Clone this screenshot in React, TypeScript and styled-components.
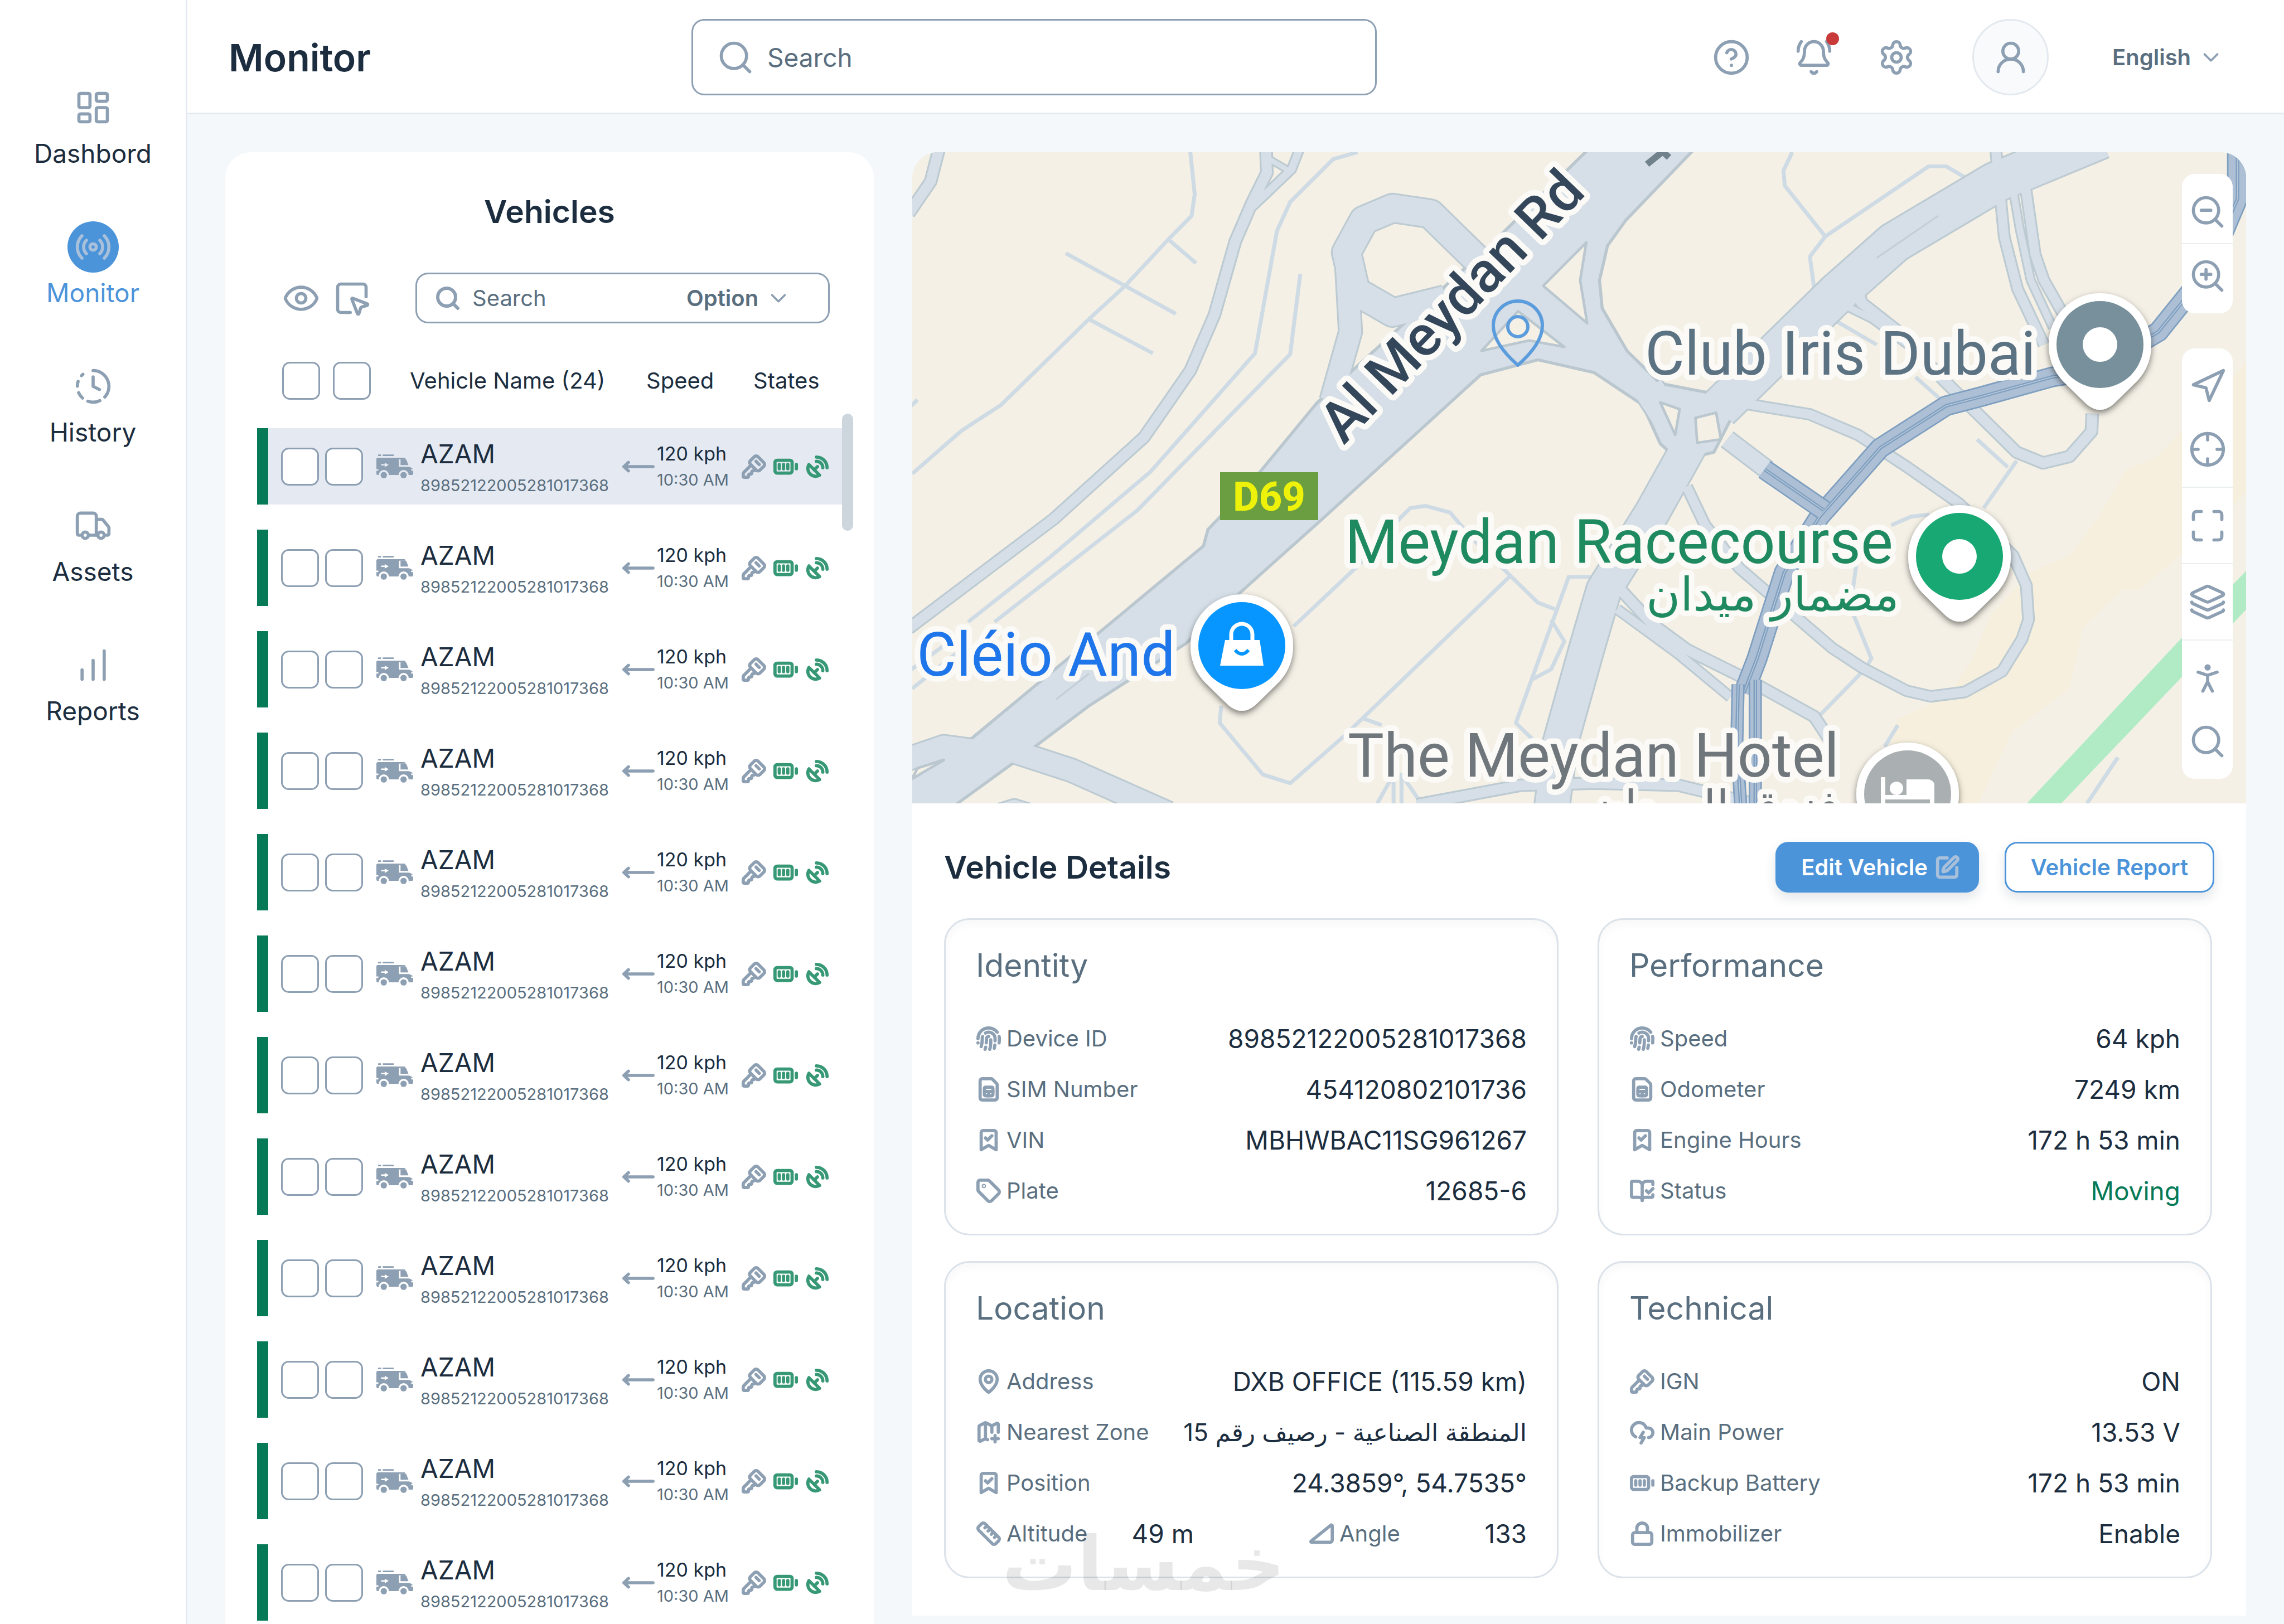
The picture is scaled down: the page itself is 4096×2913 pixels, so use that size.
import React from "react";
import styled, { createGlobalStyle, css } from "styled-components";
import {
  LayoutDashboard, Radio, ClockFading, Truck, ChartNoAxesColumnIncreasing, Search, CircleHelp, BellRing,
  Settings, UserRound, ChevronDown, Eye, SquareMousePointer, KeySquare, BatteryFull, SatelliteDish,
  ZoomOut, ZoomIn, Navigation, Crosshair, Maximize, Layers, PersonStanding, SquarePen, Fingerprint,
  CardSim, BookmarkCheck, Tag, BookOpenCheck, MapPin, MapPlus, Ruler, TriangleRight, CloudLightning, Lock,
} from "lucide-react";

const c = {
  ink: "#1b2d3e",
  slate: "#596e7e",
  icon: "#8d9fb2",
  blue: "#4c94da",
  onBlue: "#a9c0db",
  line: "#e5eaf2",
  page: "#f4f8fb",
  card: "#dbe2e9",
  green: "#067a57",
  greenIcon: "#379876",
  thumb: "#cdd5dd",
};

const GlobalStyle = createGlobalStyle`
  *, *::before, *::after { box-sizing: border-box; }
  body {
    margin: 0;
    background: ${c.page};
    color: ${c.ink};
    font-family: Inter, "DejaVu Sans", sans-serif;
    font-optical-sizing: none;
    font-size: 46px;
    line-height: 68px;
  }
  h1, h2, h3, dl, dd, ul, table { margin: 0; padding: 0; }
  button, input, select { font: inherit; color: inherit; }
  svg { display: block; flex: none; }
`;

/* ---------- shell ---------- */

const Shell = styled.div`
  display: grid;
  grid-template-columns: 336px minmax(0, 1fr);
  min-height: 100vh;
`;

const Sidebar = styled.nav`
  background: #fff;
  border-right: 3px solid ${c.line};
  padding-top: 147px;
`;

const NavList = styled.ul`
  list-style: none;
  display: flex;
  flex-direction: column;
  gap: 88px;
`;

const NavLink = styled.a<{ $active?: boolean }>`
  display: flex;
  flex-direction: column;
  align-items: center;
  gap: 2px;
  text-decoration: none;
  color: ${(p) => (p.$active ? c.blue : c.ink)};
`;

const NavIcon = styled.span<{ $active?: boolean }>`
  width: 92px;
  height: 92px;
  border-radius: 50%;
  display: grid;
  place-items: center;
  color: ${(p) => (p.$active ? c.onBlue : c.icon)};
  background: ${(p) => (p.$active ? c.blue : "transparent")};
`;

const Body = styled.div`
  display: flex;
  flex-direction: column;
  min-width: 0;
`;

const TopBar = styled.header`
  display: grid;
  grid-template-columns: 830px minmax(0, 1229px) minmax(0, 1fr);
  align-items: center;
  height: 205px;
  padding: 3px 108px 0 74px;
  background: #fff;
  border-bottom: 3px solid ${c.line};
`;

const PageTitle = styled.h1`
  font-size: 68px;
  line-height: 80px;
  font-weight: 600;
`;

const SearchBox = styled.label<{ $compact?: boolean }>`
  display: flex;
  align-items: center;
  min-width: 0;
  background: #fff;
  border: 3px solid ${c.icon};
  border-radius: 23px;
  color: ${c.icon};
  ${(p) =>
    p.$compact
      ? css`
          flex: 1;
          height: 91px;
          gap: 20px;
          padding: 0 66px 0 31px;
          font-size: 40px;
        `
      : css`
          height: 137px;
          gap: 23px;
          padding: 0 42px;
        `}
`;

const SearchInput = styled.input`
  flex: 1;
  min-width: 0;
  padding: 0;
  border: 0;
  outline: 0;
  background: none;
  color: ${c.slate};
  &::placeholder { color: ${c.slate}; opacity: 1; }
`;

const Actions = styled.div`
  display: flex;
  align-items: center;
  justify-content: flex-end;
  gap: 80px;
`;

const IconButton = styled.button`
  position: relative;
  display: grid;
  place-items: center;
  padding: 0;
  border: 0;
  background: none;
  color: ${c.icon};
  cursor: pointer;
`;

const Dot = styled.span`
  position: absolute;
  top: -11px;
  right: -11px;
  width: 23px;
  height: 23px;
  border-radius: 50%;
  background: #c93a3a;
`;

const Avatar = styled(IconButton)`
  width: 137px;
  height: 137px;
  margin: 0 34px 0 22px;
  border-radius: 50%;
  border: 3px solid #e3e9ee;
  background: #f8fafb;
`;

const Picker = styled.span`
  position: relative;
  display: flex;
  flex: none;
  align-items: center;
  color: ${c.icon};
  svg { position: absolute; right: 0; pointer-events: none; }
`;

const PickerSelect = styled.select`
  appearance: none;
  border: 0;
  outline: 0;
  background: none;
  padding: 0 58px 0 0;
  font-size: 40px;
  font-weight: 600;
  color: ${c.slate};
`;

const Main = styled.main`
  flex: 1;
  display: grid;
  grid-template-columns: minmax(0, 1163fr) minmax(0, 2392fr);
  gap: 69px;
  padding: 68px 68px 0;
`;

/* ---------- vehicles ---------- */

const VehiclesPanel = styled.section`
  background: #fff;
  border-radius: 46px 46px 0 0;
  padding: 67px 57px 0;
`;

const PanelTitle = styled.h2`
  font-size: 57px;
  line-height: 80px;
  font-weight: 600;
`;

const VehiclesTitle = styled(PanelTitle)`
  text-align: center;
`;

const Toolbar = styled.div`
  display: flex;
  align-items: center;
  gap: 23px;
  margin: 69px 22px 69px 45px;
  ${IconButton} + ${SearchBox} { margin-left: 57px; }
`;

const ListArea = styled.div`
  position: relative;
  margin-right: -20px;
  padding-right: 20px;
`;

const VehicleTable = styled.table`
  display: block;
  text-align: left;
`;

const TableHead = styled.thead`
  display: block;
  margin-bottom: 51px;
`;

const HeadRow = styled.tr`
  display: grid;
  grid-template-columns: 229px minmax(0, 1fr) 192px 159px;
  align-items: center;
  padding-left: 45px;
  font-size: 40px;
`;

const HeadCell = styled.th`
  padding: 0;
  font-weight: 400;
  white-space: nowrap;
`;

const TableBody = styled.tbody`
  display: flex;
  flex-direction: column;
  gap: 45px;
`;

const VehicleRow = styled.tr<{ $selected?: boolean }>`
  display: grid;
  grid-template-columns: 171px minmax(0, 1fr) 217px 181px;
  align-items: center;
  height: 137px;
  padding-left: 23px;
  border-left: 20px solid ${c.green};
  background: ${(p) => (p.$selected ? c.line : "#fff")};
`;

const Cell = styled.td`
  padding: 0;
  white-space: nowrap;
`;

const Checks = styled.div<{ $wide?: boolean }>`
  display: flex;
  gap: ${(p) => (p.$wide ? 23 : 11)}px;
`;

const Check = styled.input`
  appearance: none;
  width: 68px;
  height: 68px;
  margin: 0;
  border: 3px solid ${c.icon};
  border-radius: 14px;
  background: #fff;
`;

const CellLine = styled.div<{ $gap: number }>`
  display: flex;
  align-items: center;
  gap: ${(p) => p.$gap}px;
  color: ${c.icon};
`;

const Stack = styled.div`
  display: flex;
  flex-direction: column;
`;

const Name = styled.span`
  color: ${c.ink};
`;

const Speed = styled.span`
  font-size: 34px;
  line-height: 48px;
  color: ${c.ink};
`;

const Small = styled.span`
  font-size: 29px;
  line-height: 46px;
  color: ${c.slate};
`;

const OkState = styled.span`
  color: ${c.greenIcon};
`;

const ScrollThumb = styled.div`
  position: absolute;
  right: 0;
  top: 93px;
  width: 20px;
  height: 210px;
  border-radius: 10px;
  background: ${c.thumb};
`;

/* ---------- map ---------- */

const RightColumn = styled.div`
  min-width: 0;
`;

const MapFrame = styled.section`
  position: relative;
  aspect-ratio: 2392 / 1168;
  border-radius: 46px 46px 0 0;
  overflow: hidden;
`;

const MapCanvas = styled.svg`
  width: 100%;
  height: 100%;
`;

const MapTools = styled.div`
  position: absolute;
  top: 39px;
  right: 24px;
  display: flex;
  flex-direction: column;
  gap: 63px;
`;

const ToolGroup = styled.div`
  width: 91px;
  border-radius: 23px;
  background: #fff;
`;

const ToolSection = styled.div<{ $pad: string }>`
  padding: ${(p) => p.$pad};
  & + & { border-top: 2px solid #eceff2; }
`;

const Tool = styled(IconButton)`
  width: 100%;
  height: 113px;
`;

/* ---------- details ---------- */

const Details = styled.section`
  position: relative;
  background: #fff;
  margin-bottom: 15px;
  padding: 69px 57px 67px;
`;

const DetailsHead = styled.div`
  display: flex;
  align-items: center;
  justify-content: space-between;
  margin-bottom: 46px;
`;

const Buttons = styled.div`
  display: flex;
  gap: 46px;
`;

const Button = styled.button<{ $primary?: boolean }>`
  display: flex;
  align-items: center;
  justify-content: center;
  gap: 12px;
  height: 91px;
  padding: 0 ${(p) => (p.$primary ? "31px 0 43px" : "44px")};
  border: 3px solid ${c.blue};
  border-radius: 23px;
  background: ${(p) => (p.$primary ? c.blue : "#fff")};
  color: ${(p) => (p.$primary ? "#fff" : c.blue)};
  font-size: 40px;
  font-weight: 600;
  white-space: nowrap;
  box-shadow: 0 10px 20px rgba(40, 55, 75, 0.13);
  svg { color: ${c.onBlue}; }
`;

const CardGrid = styled.div`
  display: grid;
  grid-template-columns: repeat(2, minmax(0, 1fr));
  gap: 46px 70px;
  padding-right: 4px;
`;

const Card = styled.article`
  border: 3px solid ${c.card};
  border-radius: 46px;
  padding: 42px 54px 43px;
  box-shadow: inset 0 8px 14px rgba(60, 70, 60, 0.04);
`;

const CardTitle = styled.h3`
  font-size: 57px;
  line-height: 80px;
  font-weight: 400;
  color: ${c.slate};
  margin-bottom: 57px;
`;

const Fields = styled.dl`
  display: flex;
  flex-direction: column;
  gap: 23px;
`;

const Field = styled.div`
  display: flex;
  align-items: center;
  justify-content: space-between;
`;

const HalfField = styled(Field)`
  width: 391px;
`;

const Term = styled.dt`
  display: flex;
  align-items: center;
  gap: 9px;
  font-size: 40px;
  color: ${c.slate};
  svg { color: ${c.icon}; }
`;

const Value = styled.dd<{ $good?: boolean; $arabic?: boolean }>`
  white-space: nowrap;
  color: ${(p) => (p.$good ? c.green : c.ink)};
  ${(p) => p.$arabic && css`font-size: 44px;`}
`;

const Watermark = styled.div`
  position: absolute;
  left: 161px;
  bottom: 25px;
  font-family: "DejaVu Sans", sans-serif;
  font-weight: 700;
  font-size: 134px;
  line-height: 134px;
  color: rgba(0, 0, 0, 0.09);
  pointer-events: none;
`;

/* ---------- drawings ---------- */

const Van = () => (
  <svg width="66" height="43" viewBox="0 0 93 60" fill="currentColor" aria-hidden="true">
    <rect x="4" width="8" height="4" rx="1" />
    <rect x="16" width="28" height="4" rx="1" />
    <path
      fillRule="evenodd"
      d="M0 12Q0 8 4 8H71Q73 8 74 12H57V31H82Q90 33 92 37H88V41H93V48Q93 52 89 52H81.500A12.500 12.500 0 0 0 56 52H31.500A12.500 12.500 0 0 0 6 52H4Q0 52 0 48V41H5V37H0ZM12 24.500V28H21V32L31 26.200L21 20.500V24.500Z"
    />
    <path d="M61 12H73Q75 12 76 14L81 27H61Z" />
    <circle cx="18.700" cy="52" r="8" />
    <circle cx="68.700" cy="52" r="8" />
  </svg>
);

const ArrowLeft = () => (
  <svg width="66" height="66" viewBox="0 0 24 24" fill="none" stroke="currentColor" strokeWidth="2" strokeLinecap="round" strokeLinejoin="round" aria-hidden="true">
    <path d="M2.500 12H21.500M5.500 9.200L2.500 12L5.500 14.800" />
  </svg>
);

const P = (n: number[]) => n.reduce((s, v, i) => s + (i % 2 ? "," : i ? " " : "") + v, "");

type Road = { p: number[]; w: number };

const minor: number[][] = [
  [650, 22, 660, 120, 653, 170, 600, 225, 500, 335, 420, 410, 220, 610, 130, 670, 18, 770],
  [600, 225, 663, 280], [367, 257, 617, 398], [422, 412, 565, 490], [10, 618, 30, 598],
  [1030, 22, 975, 38, 877, 138, 847, 205, 797, 490, 560, 765, 330, 965, 145, 1115],
  [900, 305, 877, 492, 530, 855, 205, 1115], [18, 1270, 140, 1170], [10, 1230, 90, 1170],
  [885, 1125, 1030, 985, 1130, 870, 1150, 850, 1185, 845, 1240, 860, 1290, 920, 1440, 1070, 1478, 1085],
  [1568, 1010, 1510, 1010, 1390, 1350, 1430, 1390], [1470, 1110, 1500, 1160, 1470, 1225, 1425, 1250],
  [1375, 1010, 1000, 1380, 877, 1490, 815, 1470, 717, 1350, 720, 1310], [1045, 1340, 1085, 1355],
  [1075, 1537, 1112, 1470, 1112, 1537], [1130, 1537, 1130, 1470, 1175, 1537],
  [2018, 22, 1998, 65, 2001, 100, 2093, 218, 2058, 265, 2068, 340],
  [2093, 218, 2328, 55, 2368, 55, 2418, 85], [2438, 690, 2508, 755], [2528, 740, 2453, 850],
  [2168, 950, 2150, 1080, 2198, 1200, 2183, 1225, 2073, 1340], [2258, 1355, 2228, 1405],
  [2758, 1430, 2688, 1537], [2243, 890, 2288, 870, 2330, 865], [2298, 545, 2353, 595], [2093, 400, 2210, 470],
];

const cased: Road[] = [
  { p: [80, 10, 60, 90, 10, 165], w: 24 },
  { p: [822, 10, 824, 70, 790, 140, 752, 230, 705, 400, 650, 530, 545, 685, 340, 875, 10, 1130], w: 24 },
  { p: [900, 10, 880, 62, 790, 150], w: 18 }, { p: [824, 35, 876, 66], w: 12 },
  { p: [2480, 10, 2500, 220, 2530, 340, 2590, 470], w: 22 },
  { p: [2515, 80, 2535, 200, 2560, 320, 2610, 430], w: 16 },
  { p: [2545, 80, 2570, 260, 2590, 320, 2640, 410], w: 22 },
  { p: [2168, 340, 2175, 372, 2260, 440, 2360, 550, 2528, 720, 2588, 745, 2648, 730, 2698, 672, 2700, 630], w: 24 },
  { p: [2130, 375, 2200, 410, 2280, 470], w: 16 },
  { p: [1898, 605, 2058, 632, 2168, 680, 2280, 755, 2398, 840, 2520, 960, 2550, 1030, 2555, 1110, 2540, 1155, 2495, 1230, 2410, 1278, 2333, 1288, 2278, 1275, 2178, 1222, 2108, 1175, 1898, 990, 1820, 890, 1778, 800], w: 22 },
  { p: [1628, 1040, 1700, 1120, 1780, 1180, 1918, 1250, 2068, 1335, 2110, 1400], w: 24 },
  { p: [1620, 1085, 1760, 1190, 1878, 1290], w: 20 },
  { p: [1870, 690, 1960, 760], w: 40 },
  { p: [1165, 1540, 1400, 1495, 1568, 1490, 1760, 1495, 1940, 1540], w: 24 },
  { p: [180, 1560, 250, 1538, 320, 1560], w: 20 },
  { p: [200, 1400, 380, 1460, 600, 1560], w: 52 },
  { p: [-10, 1440, 90, 1405, 200, 1420], w: 52 },
  { p: [1320, 290, 1195, 165, 1110, 152, 1045, 180, 1005, 255, 1025, 345, 1110, 395, 1230, 365], w: 64 },
  { p: [1004, 260, 1014, 440, 970, 600], w: 50 },
  { p: [1798, 680, 1700, 860, 1590, 1040, 1550, 1180, 1490, 1400, 1470, 1560], w: 78 },
  { p: [1850, 620, 2120, 350, 2250, 232, 2480, 92, 2720, -10], w: 92 },
  { p: [1690, 570, 1760, 680], w: 70 },
];

const highway = P([
  -20, 1560, 18, 1475, 153, 1386, 680, 938, 690, 900, 718, 870, 805, 770, 938, 605, 1335, 235, 1560, 10,
  1800, 10, 1640, 180, 1598, 240, 1580, 320, 1586, 385, 1643, 485, 1718, 560, 1830, 582, 1880, 640, 1840, 720, 1760, 740,
  1718, 700, 1678, 610, 1568, 535, 1440, 505, 1310, 540, 945, 880, 765, 1045, 640, 1165, 420, 1310, 245, 1445, 90, 1560,
]);

const islands: number[][] = [
  [1452, 333, 1550, 232, 1536, 320, 1552, 420],
  [1395, 392, 1312, 484, 1420, 460, 1500, 475],
  [1718, 604, 1762, 620, 1752, 680],
  [1798, 640, 1845, 628, 1856, 690, 1802, 698],
  [18, 1480, 30, 1455, 90, 1436],
];

const busy: Road[] = [
  { p: [3030, 10, 3030, 130, 2960, 300, 2850, 440, 2700, 530, 2608, 545, 2450, 590, 2368, 612, 2218, 710, 2080, 870, 2000, 1000, 1938, 1200, 1908, 1280], w: 44 },
  { p: [1955, 760, 2090, 855], w: 44 },
  { p: [1895, 1260, 1892, 1400, 1902, 1560], w: 26 },
  { p: [1934, 1250, 1934, 1560], w: 26 },
];

const Pin = ({ x, y, fill, children }: { x: number; y: number; fill: string; children?: React.ReactNode }) => (
  <g transform={`translate(${x} ${y})`}>
    <path
      d="M-92 0A92 92 0 0 1 92 0C92 30 80 52 64 68L24 107Q0 127 -24 107L-64 68C-80 52 -92 30 -92 0Z"
      fill="#fff"
      filter="url(#pinShadow)"
    />
    <circle r="78" fill={fill} />
    {children ?? <circle r="31" fill="#fff" />}
  </g>
);

const Label = styled.text`
  font-family: Roboto, "DejaVu Sans", sans-serif;
  font-size: 109px;
  paint-order: stroke;
  stroke: #fbfaf7;
  stroke-width: 20px;
  stroke-linejoin: round;
`;

const ArabicLabel = styled(Label)`
  font-family: "DejaVu Sans", sans-serif;
  font-size: 83px;
`;

const RoadLabel = styled(Label)`
  font-size: 102px;
  font-weight: 500;
`;

const RouteBadge = styled.text`
  font-family: Roboto, sans-serif;
  font-size: 72px;
  font-weight: 800;
`;

const CityMap = () => (
  <MapCanvas viewBox="0 0 2392 1168" preserveAspectRatio="xMidYMid slice" role="img" aria-label="Map of Al Meydan Rd">
    <defs>
      <filter id="pinShadow" x="-30%" y="-30%" width="160%" height="160%">
        <feDropShadow dx="0" dy="5" stdDeviation="6" floodColor="#000" floodOpacity="0.5" />
      </filter>
    </defs>
    <rect width="2392" height="1168" fill="#f4f0e6" />
    <g transform="translate(-14.300 -17) scale(0.7891 0.771)" fill="none" strokeLinejoin="round">
      <polygon
        fill="#f6efdd"
        points={P([3060, 500, 2848, 730, 2778, 760, 2708, 880, 2648, 960, 2558, 1000, 2468, 1100, 2428, 1200, 2368, 1290, 2258, 1340, 2240, 1380, 2300, 1560, 2430, 1560, 2518, 1370, 2648, 1270, 2678, 1130, 2768, 1040, 2808, 1040, 2968, 900, 3060, 800])}
      />
      <polygon fill="#b0ebc5" points={P([2530, 1560, 2905, 1150, 3060, 985, 3060, 1075, 2608, 1560])} />
      {minor.map((p, i) => (
        <polyline key={i} points={P(p)} stroke="#cfdbe4" strokeWidth="9" />
      ))}
      {cased.map((r, i) => (
        <polyline key={i} points={P(r.p)} stroke="#bccad2" strokeWidth={r.w + 7} />
      ))}
      <polygon points={highway} fill="#d6dfe7" stroke="#bac7cf" strokeWidth="7" />
      {cased.map((r, i) => (
        <polyline key={i} points={P(r.p)} stroke="#d6dfe7" strokeWidth={r.w - 1} />
      ))}
      {islands.map((p, i) => (
        <polygon key={i} points={P(p)} fill="#f4f0e6" stroke="#bac7cf" strokeWidth="6" />
      ))}
      <polyline points={P([345, 1295, 420, 1235])} stroke="#c3ced7" strokeWidth="4" />
      <polyline points={P([2210, 268, 2350, 170])} stroke="#c3ced7" strokeWidth="4" />
      <path d="M1688 50L1722 22M1718 16L1738 34" stroke="#72828d" strokeWidth="15" />
      {busy.map((r, i) => (
        <g key={i}>
          <polyline points={P(r.p)} stroke="#7f9fc0" strokeWidth={r.w + 4} />
          <polyline points={P(r.p)} stroke="#acbfd4" strokeWidth={r.w - 3} />
          <polyline points={P(r.p)} stroke="#7f9fc0" strokeWidth="8" />
          <polyline points={P(r.p)} stroke="#bccbdb" strokeWidth="2" />
        </g>
      ))}
    </g>

    <rect x="552" y="574" width="176" height="86" fill="#6b9d41" />
    <RouteBadge x="640" y="643" textAnchor="middle" fill="#eef20a">D69</RouteBadge>
    <RoadLabel transform="translate(774 526) rotate(-46)" fill="#34475a">Al Meydan Rd</RoadLabel>
    <Label x="1314" y="399" fill="#5b7283">Club Iris Dubai</Label>
    <Label x="776" y="737" fill="#1f8a60">Meydan Racecourse</Label>
    <ArabicLabel x="1543" y="822" textAnchor="middle" fill="#1f8a60">مضمار ميدان</ArabicLabel>
    <Label x="8" y="939" fill="#1f76ea">Cléio And</Label>
    <Label x="781" y="1120" fill="#70777c">The Meydan Hotel</Label>
    <ArabicLabel x="1440" y="1204" textAnchor="middle" fill="#70777c">فندق الميدان</ArabicLabel>

    <g transform="translate(1086 313)" fill="none" stroke="#5b9cdd" strokeWidth="6" strokeLinejoin="round">
      <path d="M0 69C-16 55 -44 28 -44 -2A44 44 0 0 1 44 -2C44 28 16 55 0 69Z" />
      <circle r="18" />
    </g>
    <Pin x={2130} y={345} fill="#78909c" />
    <Pin x={1878} y={725} fill="#18a873" />
    <Pin x={591} y={885} fill="#0795ff">
      <path d="M-30 -10H32L39 36H-39Z" fill="#fff" />
      <path d="M-19 -8V-20A19 19 0 0 1 19 -20V-8" fill="none" stroke="#fff" strokeWidth="7" />
      <path d="M-12 8Q0 22 12 8" fill="none" stroke="#0795ff" strokeWidth="6" />
    </Pin>
    <Pin x={1785} y={1151} fill="#aab0b2">
      <path d="M-44 -30V30M44 22V-16Q44 -20 38 -22H2V6H-44" fill="none" stroke="#fff" strokeWidth="8" />
      <circle cx="-20" cy="-10" r="12" fill="#fff" />
      <path d="M0 -20H36Q46 -18 46 -8V10H0Z" fill="#fff" />
    </Pin>
  </MapCanvas>
);

/* ---------- data ---------- */

const navItems = [
  { label: "Dashbord", Icon: LayoutDashboard },
  { label: "Monitor", Icon: Radio, active: true },
  { label: "History", Icon: ClockFading },
  { label: "Assets", Icon: Truck },
  { label: "Reports", Icon: ChartNoAxesColumnIncreasing },
];

const vehicles = Array.from({ length: 12 }, (_, id) => ({
  id, name: "AZAM", device: "89852122005281017368", speed: "120 kph", time: "10:30 AM",
}));

type FieldData = { Icon: React.ElementType; label: string; value: string; good?: boolean; arabic?: boolean };

const identity: FieldData[] = [
  { Icon: Fingerprint, label: "Device ID", value: "89852122005281017368" },
  { Icon: CardSim, label: "SIM Number", value: "454120802101736" },
  { Icon: BookmarkCheck, label: "VIN", value: "MBHWBAC11SG961267" },
  { Icon: Tag, label: "Plate", value: "12685-6" },
];
const performanceFields: FieldData[] = [
  { Icon: Fingerprint, label: "Speed", value: "64 kph" },
  { Icon: CardSim, label: "Odometer", value: "7249 km" },
  { Icon: BookmarkCheck, label: "Engine Hours", value: "172 h 53 min" },
  { Icon: BookOpenCheck, label: "Status", value: "Moving", good: true },
];
const location: FieldData[] = [
  { Icon: MapPin, label: "Address", value: "DXB OFFICE (115.59 km)" },
  { Icon: MapPlus, label: "Nearest Zone", value: "المنطقة الصناعية - رصيف رقم 15", arabic: true },
  { Icon: BookmarkCheck, label: "Position", value: "24.3859°, 54.7535°" },
];
const technical: FieldData[] = [
  { Icon: KeySquare, label: "IGN", value: "ON" },
  { Icon: CloudLightning, label: "Main Power", value: "13.53 V" },
  { Icon: BatteryFull, label: "Backup Battery", value: "172 h 53 min" },
  { Icon: Lock, label: "Immobilizer", value: "Enable" },
];

const FieldContent = ({ Icon, label, value, good, arabic }: FieldData) => (
  <>
    <Term><Icon size={46} strokeWidth={3} /> {label}</Term>
    <Value $good={good} $arabic={arabic} dir={arabic ? "rtl" : undefined}>{value}</Value>
  </>
);

const InfoCard = ({ title, fields, children }: { title: string; fields: FieldData[]; children?: React.ReactNode }) => (
  <Card>
    <CardTitle>{title}</CardTitle>
    <Fields>
      {fields.map((f) => (
        <Field key={f.label}><FieldContent {...f} /></Field>
      ))}
      {children}
    </Fields>
  </Card>
);

const ToolButton = ({ Icon, label }: { Icon: React.ElementType; label: string }) => (
  <Tool type="button" aria-label={label}><Icon size={68} /></Tool>
);

export default function App() {
  return (
    <>
      <GlobalStyle />
      <Shell>
        <Sidebar aria-label="Main">
          <NavList>
            {navItems.map(({ label, Icon, active }) => (
              <li key={label}>
                <NavLink href="#" $active={active} aria-current={active ? "page" : undefined}>
                  <NavIcon $active={active}><Icon size={68} /></NavIcon>
                  {label}
                </NavLink>
              </li>
            ))}
          </NavList>
        </Sidebar>

        <Body>
          <TopBar>
            <PageTitle>Monitor</PageTitle>
            <SearchBox>
              <Search size={68} />
              <SearchInput type="search" placeholder="Search" aria-label="Search" />
            </SearchBox>
            <Actions>
              <IconButton type="button" aria-label="Help"><CircleHelp size={68} /></IconButton>
              <IconButton type="button" aria-label="Notifications"><BellRing size={68} /><Dot /></IconButton>
              <IconButton type="button" aria-label="Settings"><Settings size={68} /></IconButton>
              <Avatar type="button" aria-label="Account"><UserRound size={68} /></Avatar>
              <Picker>
                <PickerSelect aria-label="Language"><option>English</option></PickerSelect>
                <ChevronDown size={46} />
              </Picker>
            </Actions>
          </TopBar>

          <Main>
            <VehiclesPanel>
              <VehiclesTitle>Vehicles</VehiclesTitle>
              <Toolbar>
                <IconButton type="button" aria-label="Show all"><Eye size={68} /></IconButton>
                <IconButton type="button" aria-label="Select"><SquareMousePointer size={68} /></IconButton>
                <SearchBox as="div" $compact>
                  <Search size={48} strokeWidth={3} />
                  <SearchInput type="search" placeholder="Search" aria-label="Search vehicles" />
                  <Picker>
                    <PickerSelect aria-label="Option"><option>Option</option></PickerSelect>
                    <ChevronDown size={46} />
                  </Picker>
                </SearchBox>
              </Toolbar>
              <ListArea>
                <VehicleTable>
                  <TableHead>
                    <HeadRow>
                      <HeadCell>
                        <Checks $wide>
                          <Check type="checkbox" aria-label="Show all vehicles" />
                          <Check type="checkbox" aria-label="Select all vehicles" />
                        </Checks>
                      </HeadCell>
                      <HeadCell scope="col">Vehicle Name (24)</HeadCell>
                      <HeadCell scope="col">Speed</HeadCell>
                      <HeadCell scope="col">States</HeadCell>
                    </HeadRow>
                  </TableHead>
                  <TableBody>
                    {vehicles.map((v) => (
                      <VehicleRow key={v.id} $selected={v.id === 0}>
                        <Cell>
                          <Checks>
                            <Check type="checkbox" aria-label={`Show ${v.name}`} />
                            <Check type="checkbox" aria-label={`Select ${v.name}`} />
                          </Checks>
                        </Cell>
                        <Cell>
                          <CellLine $gap={13}>
                            <Van />
                            <Stack><Name>{v.name}</Name><Small>{v.device}</Small></Stack>
                          </CellLine>
                        </Cell>
                        <Cell>
                          <CellLine $gap={0}>
                            <ArrowLeft />
                            <Stack><Speed>{v.speed}</Speed><Small>{v.time}</Small></Stack>
                          </CellLine>
                        </Cell>
                        <Cell>
                          <CellLine $gap={11}>
                            <KeySquare size={46} strokeWidth={3} />
                            <OkState><BatteryFull size={46} strokeWidth={3} /></OkState>
                            <OkState><SatelliteDish size={46} strokeWidth={3} /></OkState>
                          </CellLine>
                        </Cell>
                      </VehicleRow>
                    ))}
                  </TableBody>
                </VehicleTable>
                <ScrollThumb />
              </ListArea>
            </VehiclesPanel>

            <RightColumn>
              <MapFrame>
                <CityMap />
                <MapTools>
                  <ToolGroup>
                    <ToolSection $pad="11px 0 0"><ToolButton Icon={ZoomOut} label="Zoom out" /></ToolSection>
                    <ToolSection $pad="0 0 11px"><ToolButton Icon={ZoomIn} label="Zoom in" /></ToolSection>
                  </ToolGroup>
                  <ToolGroup>
                    <ToolSection $pad="11px 0">
                      <ToolButton Icon={Navigation} label="Navigate" />
                      <ToolButton Icon={Crosshair} label="Locate" />
                    </ToolSection>
                    <ToolSection $pad="11px 0"><ToolButton Icon={Maximize} label="Full screen" /></ToolSection>
                    <ToolSection $pad="11px 0"><ToolButton Icon={Layers} label="Layers" /></ToolSection>
                    <ToolSection $pad="11px 0">
                      <ToolButton Icon={PersonStanding} label="Street view" />
                      <ToolButton Icon={Search} label="Search map" />
                    </ToolSection>
                  </ToolGroup>
                </MapTools>
              </MapFrame>

              <Details>
                <DetailsHead>
                  <PanelTitle>Vehicle Details</PanelTitle>
                  <Buttons>
                    <Button type="button" $primary>Edit Vehicle <SquarePen size={46} strokeWidth={3} /></Button>
                    <Button type="button">Vehicle Report</Button>
                  </Buttons>
                </DetailsHead>
                <CardGrid>
                  <InfoCard title="Identity" fields={identity} />
                  <InfoCard title="Performance" fields={performanceFields} />
                  <InfoCard title="Location" fields={location}>
                    <Field as="div">
                      <HalfField><FieldContent Icon={Ruler} label="Altitude" value="49 m" /></HalfField>
                      <HalfField><FieldContent Icon={TriangleRight} label="Angle" value="133" /></HalfField>
                    </Field>
                  </InfoCard>
                  <InfoCard title="Technical" fields={technical} />
                </CardGrid>
                <Watermark lang="ar">خمسات</Watermark>
              </Details>
            </RightColumn>
          </Main>
        </Body>
      </Shell>
    </>
  );
}
